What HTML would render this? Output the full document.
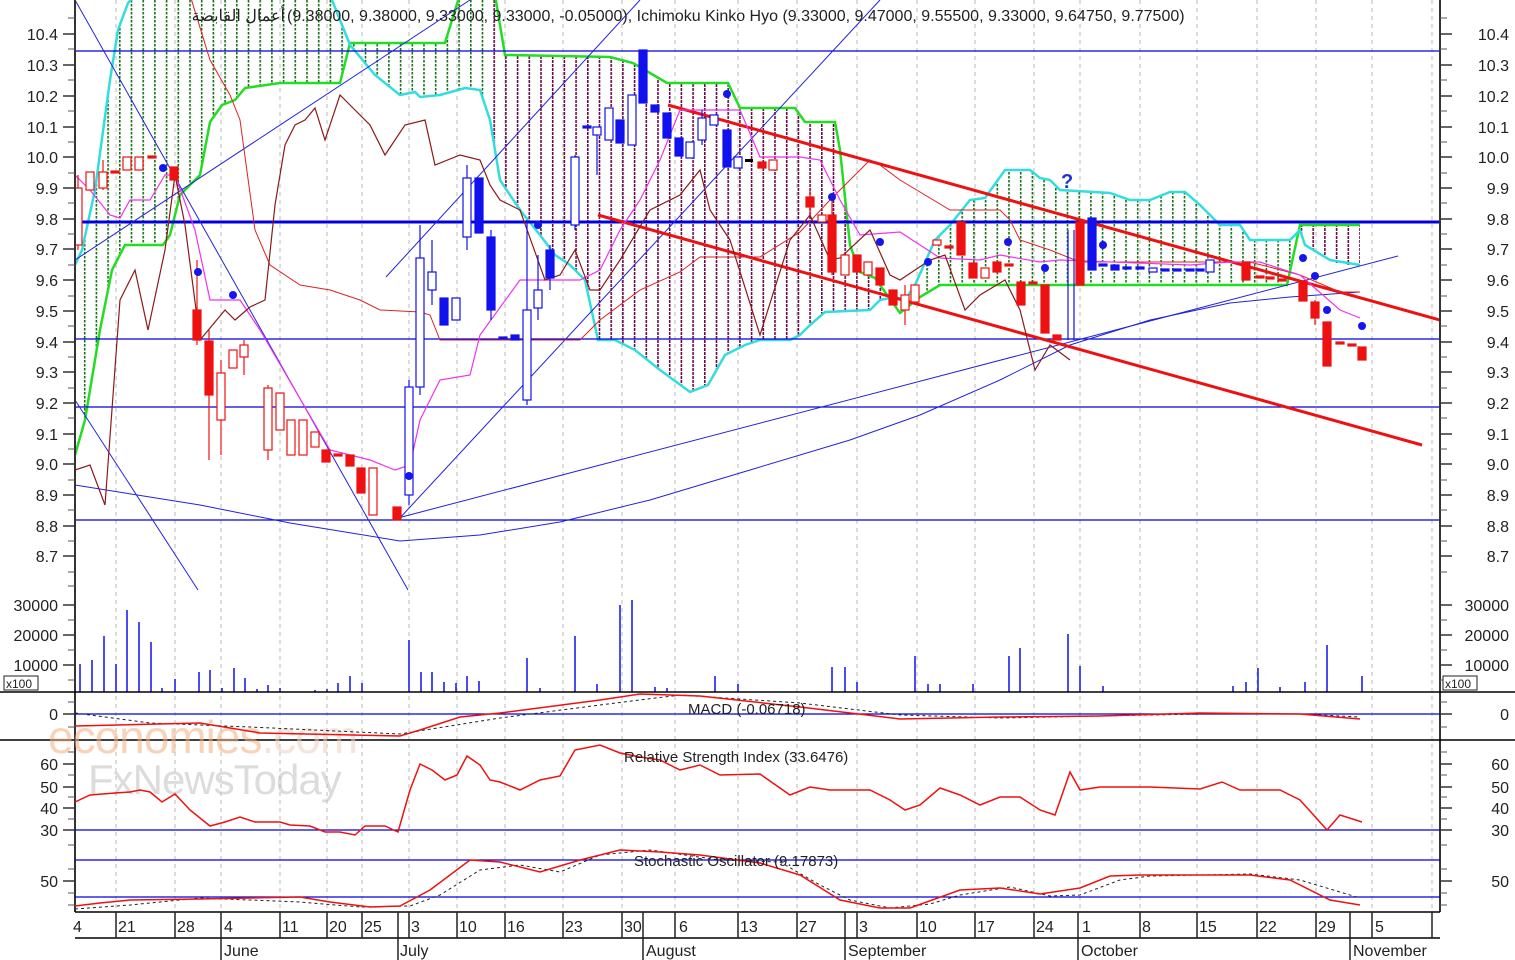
<!DOCTYPE html>
<html><head><meta charset="utf-8"><style>
html,body{margin:0;padding:0;background:#fff;}
svg{display:block;font-family:"Liberation Sans","Noto Sans CJK SC",sans-serif;}
</style></head><body>
<svg width="1515" height="960" viewBox="0 0 1515 960" xmlns="http://www.w3.org/2000/svg">
<defs>
<pattern id="pg" x="2" y="0" width="11.7" height="4" patternUnits="userSpaceOnUse"><rect x="0" y="0" width="1.6" height="2.5" fill="#167016"/></pattern>
<pattern id="pp" x="2" y="0" width="11.7" height="4" patternUnits="userSpaceOnUse"><rect x="0" y="0" width="1.6" height="3" fill="#6a0a4a"/></pattern>
<clipPath id="cl"><polygon points="75,455 85,420 100,330 112,270 125,245 163,245 170,235 180,195 200,175 210,122 222,105 235,100 245,88 280,83 340,83 350,43 445,43 455,10 460,-5 495,-5 505,55 610,57 633,63 667,83 728,83 740,108 795,108 805,122 835,122 840,150 850,245 860,272 875,278 900,313 920,297 940,285 1287,285 1300,225 1360,225 1360,265 1340,265 1330,260 1305,245 1300,230 1290,240 1250,240 1240,225 1220,225 1200,205 1185,192 1170,192 1150,200 1130,200 1110,193 1060,190 1050,180 1040,178 1030,170 1005,170 985,198 970,200 950,225 935,240 915,285 905,300 895,297 880,300 870,310 825,312 810,325 800,335 790,340 760,340 745,345 725,355 708,385 690,392 660,370 635,350 615,340 598,340 585,280 570,265 555,255 540,235 520,210 500,180 490,120 480,90 465,88 440,95 420,97 415,92 400,95 375,75 350,45 330,-5 128,-5 118,30 110,80 95,190 82,250 75,265"/></clipPath>
<clipPath id="chart"><rect x="75" y="0" width="1365" height="692"/></clipPath>
</defs>
<g stroke="#bbb" stroke-dasharray="4,4" stroke-width="1">
<path d="M116 0V912M175 0V912M221 0V912M280 0V912M327 0V912M362 0V912M409 0V912M457 0V912M505 0V912M563 0V912M622 0V912M675 0V912M738 0V912M797 0V912M857 0V912M917 0V912M975 0V912M1034 0V912M1080 0V912M1140 0V912M1197 0V912M1257 0V912M1316 0V912M1372 0V912M1432 0V912"/>
</g>
<g clip-path="url(#chart)">
<g clip-path="url(#cl)">
<rect x="75" y="0" width="410" height="600" fill="url(#pg)"/>
<rect x="485" y="0" width="432" height="600" fill="url(#pp)"/>
<rect x="917" y="0" width="380" height="600" fill="url(#pg)"/>
<rect x="1297" y="0" width="70" height="600" fill="url(#pp)"/>
</g>
<polyline fill="none" stroke="#22dd22" stroke-width="2.5" points="75,455 85,420 100,330 112,270 125,245 163,245 170,235 180,195 200,175 210,122 222,105 235,100 245,88 280,83 340,83 350,43 445,43 455,10 460,-5 495,-5 505,55 610,57 633,63 667,83 728,83 740,108 795,108 805,122 835,122 840,150 850,245 860,272 875,278 900,313 920,297 940,285 1287,285 1300,225 1360,225"/>
<polyline fill="none" stroke="#33dddd" stroke-width="2.5" points="75,265 82,250 95,190 110,80 118,30 128,3 135,-5 330,-5 350,45 375,75 400,95 415,92 420,97 440,95 465,88 480,90 490,120 500,180 520,210 540,235 555,255 570,265 585,280 598,340 615,340 635,350 660,370 690,392 708,385 725,355 745,345 760,340 790,340 800,335 810,325 825,312 870,310 880,300 895,297 905,300 915,285 935,240 950,225 970,200 985,198 1005,170 1030,170 1040,178 1050,180 1060,190 1110,193 1130,200 1150,200 1170,192 1185,192 1200,205 1220,225 1240,225 1250,240 1290,240 1300,230 1305,245 1330,260 1360,265"/>
<g stroke="#0000dd" stroke-width="1.3">
<path d="M75 51H1440M75 339H1440M75 407H1440M75 520H1440"/>
</g>
<path d="M75 222H1440" stroke="#0000dd" stroke-width="3"/>
<g stroke="#2222dd" stroke-width="1" fill="none">
<path d="M75 0L408 590M75 400L198 590M75 260L470 0M386 277L640 0M398 520L880 0M398 518L1398 256"/>
<polyline points="75,485 200,505 290,523 400,541 480,535 560,522 650,500 750,470 850,440 920,415 1000,380 1070,345 1150,320 1230,303 1290,297 1360,292"/>
</g>
<g stroke="#ee1111" stroke-width="3"><path d="M668 105L1440 320M598 215L1422 445"/></g>
<polyline fill="none" stroke="#dd2222" stroke-width="1" points="190,-5 210,60 230,95 240,120 255,230 270,265 300,285 330,290 360,300 380,310 420,312 430,315 440,340 580,340 600,320 640,290 680,272 700,257 760,257 800,232 830,200 870,160 880,165 900,180 950,210 1000,210 1010,220 1020,240 1050,250 1080,262 1250,262 1300,275 1340,292 1360,292"/>
<polyline fill="none" stroke="#ee33ee" stroke-width="1.2" points="75,175 90,190 110,215 120,218 130,200 150,200 165,175 175,175 195,230 210,300 240,300 260,330 330,450 370,460 395,470 410,465 420,420 440,380 470,375 480,335 520,280 580,280 600,270 620,230 640,200 660,160 680,110 740,110 760,157 800,157 820,160 840,200 860,235 900,232 940,258 980,260 1000,255 1040,262 1060,260 1190,265 1230,262 1260,262 1300,275 1340,310 1360,318"/>
<polyline fill="none" stroke="#8b1a1a" stroke-width="1.2" points="75,470 90,465 105,505 120,300 135,270 148,330 165,250 175,175 185,225 200,340 225,310 235,320 250,307 265,300 275,205 285,145 295,125 305,120 315,108 325,140 340,95 350,105 370,125 385,155 405,125 425,120 435,165 460,155 480,160 490,185 500,200 520,210 545,280 560,275 575,250 590,290 600,290 620,260 650,210 680,195 700,170 710,210 730,240 760,335 790,240 810,215 830,260 840,258 870,230 890,275 900,280 930,260 945,255 965,310 980,295 1005,280 1020,310 1035,370 1050,345 1070,360"/>
<g stroke-width="1.2">
<g stroke="#ee1111" fill="#fff">
<path d="M78 175V250M103 160V190M221 360V455M244 340V375M268 385V460M905 285V325M197 260V345M209 330V460M832 200V275M810 190V215M1315 300V325" fill="none"/>
<rect x="74" y="188" width="8" height="57"/><rect x="86" y="172" width="8" height="18"/><rect x="99" y="172" width="8" height="16"/>
<rect x="123" y="157" width="8" height="13"/><rect x="135" y="157" width="8" height="13"/>
<rect x="217" y="373" width="8" height="47"/><rect x="229" y="350" width="8" height="18"/><rect x="240" y="345" width="8" height="12"/>
<rect x="264" y="388" width="8" height="62"/><rect x="276" y="393" width="8" height="37"/><rect x="287" y="420" width="8" height="35"/><rect x="299" y="420" width="8" height="35"/><rect x="311" y="432" width="8" height="15"/><rect x="369" y="468" width="8" height="47"/>
<rect x="769" y="160" width="8" height="10"/><rect x="818" y="215" width="8" height="7"/><rect x="841" y="255" width="8" height="20"/><rect x="864" y="262" width="8" height="13"/><rect x="901" y="295" width="8" height="15"/><rect x="911" y="285" width="8" height="17"/><rect x="933" y="240" width="8" height="5"/><rect x="981" y="268" width="8" height="10"/>
</g>
<g fill="#ee1111" stroke="#ee1111">
<rect x="170" y="167" width="8" height="13"/><rect x="193" y="310" width="8" height="30"/><rect x="205" y="341" width="8" height="54"/><rect x="322" y="450" width="8" height="12"/><rect x="346" y="455" width="8" height="11"/><rect x="357" y="468" width="8" height="25"/><rect x="393" y="507" width="8" height="13"/>
<rect x="758" y="162" width="8" height="6"/><rect x="806" y="197" width="8" height="10"/><rect x="828" y="215" width="8" height="57"/><rect x="853" y="255" width="8" height="17"/><rect x="876" y="268" width="8" height="17"/><rect x="889" y="290" width="8" height="15"/>
<rect x="957" y="222" width="8" height="33"/><rect x="969" y="263" width="8" height="15"/><rect x="993" y="262" width="8" height="10"/><rect x="1017" y="282" width="8" height="23"/><rect x="1041" y="285" width="8" height="48"/><rect x="1053" y="335" width="8" height="5"/><rect x="1076" y="222" width="8" height="63"/>
<rect x="1242" y="262" width="8" height="18"/><rect x="1299" y="281" width="8" height="20"/><rect x="1311" y="302" width="8" height="16"/><rect x="1323" y="322" width="8" height="44"/><rect x="1358" y="347" width="8" height="13"/>
<rect x="111" y="171" width="8" height="2"/><rect x="148" y="156" width="8" height="2"/><rect x="334" y="454" width="8" height="2"/><rect x="945" y="246" width="8" height="2"/><rect x="1005" y="264" width="8" height="2"/><rect x="1029" y="282" width="8" height="2"/><rect x="1256" y="276" width="8" height="2"/><rect x="1266" y="277" width="8" height="2"/><rect x="1278" y="279" width="8" height="2"/><rect x="1336" y="342" width="8" height="2"/><rect x="1348" y="344" width="8" height="2"/>
</g>
<g stroke="#1111ee" fill="#fff">
<path d="M409 380V505M420 225V395M432 240V305M467 165V250M491 230V320M527 220V405M538 255V320M550 245V290M575 155V230M597 127V175M702 110V145" fill="none"/>
<rect x="405" y="387" width="8" height="108"/><rect x="416" y="258" width="8" height="129"/><rect x="428" y="272" width="8" height="18"/><rect x="452" y="298" width="8" height="22"/><rect x="463" y="178" width="8" height="59"/>
<rect x="523" y="310" width="8" height="90"/><rect x="534" y="290" width="8" height="18"/><rect x="571" y="157" width="8" height="68"/><rect x="593" y="127" width="8" height="8"/><rect x="605" y="108" width="8" height="32"/><rect x="628" y="95" width="8" height="50"/>
<rect x="686" y="142" width="8" height="16"/><rect x="698" y="118" width="8" height="22"/><rect x="710" y="115" width="8" height="10"/><rect x="734" y="157" width="8" height="11"/><rect x="1149" y="268" width="8" height="4"/><rect x="1206" y="260" width="8" height="12"/>
</g>
<g fill="#1111ee" stroke="#1111ee">
<rect x="440" y="298" width="8" height="27"/><rect x="475" y="178" width="8" height="55"/><rect x="487" y="237" width="8" height="73"/><rect x="511" y="335" width="8" height="5"/><rect x="546" y="250" width="8" height="28"/>
<rect x="616" y="120" width="8" height="23"/><rect x="639" y="50" width="8" height="53"/><rect x="651" y="105" width="8" height="7"/><rect x="663" y="113" width="8" height="25"/><rect x="675" y="138" width="8" height="18"/><rect x="723" y="130" width="8" height="37"/>
<rect x="1088" y="218" width="8" height="52"/><rect x="1111" y="265" width="8" height="5"/>
<rect x="499" y="337" width="8" height="2"/><rect x="583" y="126" width="8" height="2"/><rect x="1099" y="264" width="8" height="2"/><rect x="1123" y="267" width="8" height="2"/><rect x="1136" y="267" width="8" height="2"/><rect x="1161" y="269" width="8" height="2"/><rect x="1173" y="269" width="8" height="2"/><rect x="1186" y="269" width="8" height="2"/><rect x="1196" y="269" width="8" height="2"/>
</g>
<rect x="745" y="159" width="8" height="3" fill="#000"/>
<path d="M1068 230V340M1074 230V340" stroke="#1111ee" stroke-width="1.2"/>
</g>
<g fill="#1515ee">
<circle cx="163" cy="168" r="4"/><circle cx="198" cy="272" r="4"/><circle cx="233" cy="295" r="4"/><circle cx="409" cy="476" r="4"/><circle cx="538" cy="225" r="4"/><circle cx="727" cy="94" r="4"/><circle cx="832" cy="197" r="4"/><circle cx="880" cy="242" r="4"/><circle cx="928" cy="262" r="4"/><circle cx="1008" cy="242" r="4"/><circle cx="1045" cy="268" r="4"/><circle cx="1103" cy="245" r="4"/><circle cx="1303" cy="258" r="4"/><circle cx="1315" cy="276" r="4"/><circle cx="1327" cy="310" r="4"/><circle cx="1362" cy="326" r="4"/>
</g>
<text x="1061" y="188" font-size="20" font-weight="bold" fill="#2233cc">?</text>
<g stroke="#1111ee" stroke-width="1.5">
<path d="M80 664V692M92 660V692M104 636V692M116 664V692M127 610V692M139 622V692M151 642V692M162 688V692M175 679V692M199 672V692M210 670V692M222 688V692M234 668V692M245 678V692M257 689V692M268 685V692M280 688V692M315 690V692M327 689V692M338 683V692M350 676V692M362 683V692M409 640V692M421 672V692M432 672V692M444 682V692M456 683V692M467 676V692M479 681V692M527 658V692M540 688V692M575 636V692M597 684V692M620 605V692M632 600V692M655 687V692M667 688V692M715 676V692M738 684V692M832 667V692M845 667V692M857 682V692M915 656V692M928 684V692M940 684V692M973 684V692M1009 656V692M1020 648V692M1068 634V692M1080 666V692M1103 686V692M1233 686V692M1246 682V692M1258 668V692M1280 687V692M1305 682V692M1327 645V692M1362 676V692"/>
</g>
</g>
<text x="285" y="21" font-size="16" fill="#222" text-anchor="end">أعمال القابضة</text>
<text x="287" y="21" font-size="16" fill="#222">(9.38000, 9.38000, 9.33000, 9.33000, -0.05000), Ichimoku Kinko Hyo (9.33000, 9.47000, 9.55500, 9.33000, 9.64750, 9.77500)</text>
<g stroke="#333" stroke-width="2"><path d="M75 0V912M1440 0V912"/></g>
<g stroke="#000" stroke-width="1.5"><path d="M0 692H1515M0 740H1515M75 912H1440M75 938H1440"/></g>
<g stroke="#333" stroke-width="1.5">
<path d="M63 34H75M63 65H75M63 96H75M63 127H75M63 157H75M63 188H75M63 219H75M63 249H75M63 280H75M63 311H75M63 342H75M63 372H75M63 403H75M63 434H75M63 464H75M63 495H75M63 526H75M63 556H75M63 605H75M63 635H75M63 665H75M63 714H75M63 764H75M63 787H75M63 808H75M63 830H75M63 881H75"/>
<path d="M1440 34H1452M1440 65H1452M1440 96H1452M1440 127H1452M1440 157H1452M1440 188H1452M1440 219H1452M1440 249H1452M1440 280H1452M1440 311H1452M1440 342H1452M1440 372H1452M1440 403H1452M1440 434H1452M1440 464H1452M1440 495H1452M1440 526H1452M1440 556H1452M1440 605H1452M1440 635H1452M1440 665H1452M1440 714H1452M1440 764H1452M1440 787H1452M1440 808H1452M1440 830H1452M1440 881H1452"/>
</g>
<g stroke="#555" stroke-width="1"><path d="M68 18H75M68 49H75M68 80H75M68 111H75M68 142H75M68 173H75M68 203H75M68 234H75M68 265H75M68 296H75M68 326H75M68 357H75M68 388H75M68 418H75M68 449H75M68 480H75M68 510H75M68 541H75M68 572H75M68 586H75M68 620H75M68 650H75M68 680H75M68 702H75M68 727H75M68 752H75M68 775H75M68 797H75M68 819H75M68 845H75M68 869H75M68 893H75M68 905H75
M1440 18H1447M1440 49H1447M1440 80H1447M1440 111H1447M1440 142H1447M1440 173H1447M1440 203H1447M1440 234H1447M1440 265H1447M1440 296H1447M1440 326H1447M1440 357H1447M1440 388H1447M1440 418H1447M1440 449H1447M1440 480H1447M1440 510H1447M1440 541H1447M1440 572H1447M1440 620H1447M1440 650H1447M1440 680H1447M1440 702H1447M1440 727H1447M1440 752H1447M1440 775H1447M1440 797H1447M1440 819H1447M1440 845H1447M1440 869H1447M1440 893H1447M1440 905H1447"/></g>
<g font-size="16" fill="#222" text-anchor="end">
<text x="58" y="40">10.4</text><text x="58" y="71">10.3</text><text x="58" y="102">10.2</text><text x="58" y="133">10.1</text><text x="58" y="163">10.0</text><text x="58" y="194">9.9</text><text x="58" y="225">9.8</text><text x="58" y="255">9.7</text><text x="58" y="286">9.6</text><text x="58" y="317">9.5</text><text x="58" y="348">9.4</text><text x="58" y="378">9.3</text><text x="58" y="409">9.2</text><text x="58" y="440">9.1</text><text x="58" y="470">9.0</text><text x="58" y="501">8.9</text><text x="58" y="532">8.8</text><text x="58" y="562">8.7</text>
<text x="58" y="611">30000</text><text x="58" y="641">20000</text><text x="58" y="671">10000</text><text x="58" y="720">0</text><text x="58" y="770">60</text><text x="58" y="793">50</text><text x="58" y="814">40</text><text x="58" y="836">30</text><text x="58" y="887">50</text>
<text x="1509" y="40">10.4</text><text x="1509" y="71">10.3</text><text x="1509" y="102">10.2</text><text x="1509" y="133">10.1</text><text x="1509" y="163">10.0</text><text x="1509" y="194">9.9</text><text x="1509" y="225">9.8</text><text x="1509" y="255">9.7</text><text x="1509" y="286">9.6</text><text x="1509" y="317">9.5</text><text x="1509" y="348">9.4</text><text x="1509" y="378">9.3</text><text x="1509" y="409">9.2</text><text x="1509" y="440">9.1</text><text x="1509" y="470">9.0</text><text x="1509" y="501">8.9</text><text x="1509" y="532">8.8</text><text x="1509" y="562">8.7</text>
<text x="1509" y="611">30000</text><text x="1509" y="641">20000</text><text x="1509" y="671">10000</text><text x="1509" y="720">0</text><text x="1509" y="770">60</text><text x="1509" y="793">50</text><text x="1509" y="814">40</text><text x="1509" y="836">30</text><text x="1509" y="887">50</text>
</g>
<rect x="4" y="676" width="34" height="14" fill="#fff" stroke="#222"/><text x="6" y="688" font-size="12" fill="#222">x100</text>
<rect x="1443" y="676" width="34" height="14" fill="#fff" stroke="#222"/><text x="1445" y="688" font-size="12" fill="#222">x100</text>
<text x="48" y="753" font-size="46" fill="#f5b080" opacity="0.55" letter-spacing="-1">economies<tspan fill="#f0d0c0">.com</tspan></text>
<text x="88" y="794" font-size="42" fill="#bbb" opacity="0.5" letter-spacing="-1">FxNewsToday</text>
<path d="M75 714H1440" stroke="#0000dd" stroke-width="1.3"/>
<polyline fill="none" stroke="#222" stroke-width="1" stroke-dasharray="3,3" points="75,713 150,723 250,727 400,734 500,718 600,705 680,695 800,703 900,715 1000,718 1200,714 1300,714 1360,717"/>
<polyline fill="none" stroke="#ee1111" stroke-width="1.5" points="75,726 200,723 260,733 400,736 420,730 460,717 500,713 600,700 640,694 700,696 800,707 900,719 1000,717 1100,716 1200,713 1300,714 1360,719"/>
<text x="688" y="714" font-size="15" fill="#222">MACD (-0.06718)</text>
<path d="M75 830H1440" stroke="#0000dd" stroke-width="1.3"/>
<polyline fill="none" stroke="#ee1111" stroke-width="1.5" points="75,802 90,795 115,793 130,792 140,790 150,792 162,802 175,794 190,810 210,826 225,822 240,817 255,822 280,822 290,825 310,826 325,832 340,832 355,835 365,826 385,826 398,832 410,790 420,764 432,770 445,780 457,775 467,756 480,765 490,780 500,782 520,790 540,780 560,776 575,750 600,745 620,753 640,757 660,760 680,770 700,765 720,775 760,774 790,795 810,787 830,790 870,790 890,800 905,810 920,805 940,788 960,795 980,805 1000,797 1020,797 1040,810 1055,815 1070,772 1080,790 1100,787 1150,787 1200,789 1222,782 1240,790 1280,790 1300,800 1327,830 1340,815 1362,822"/>
<text x="624" y="762" font-size="15" fill="#222">Relative Strength Index (33.6476)</text>
<path d="M75 860H1440M75 897H1440" stroke="#0000dd" stroke-width="1.3"/>
<polyline fill="none" stroke="#222" stroke-width="1" stroke-dasharray="3,3" points="75,909 130,905 200,898 300,902 360,907 410,906 440,895 480,870 520,865 560,872 600,855 650,850 720,860 780,862 820,885 850,900 890,908 930,904 960,895 1010,887 1050,896 1080,895 1120,880 1150,876 1250,874 1300,880 1340,892 1360,898"/>
<polyline fill="none" stroke="#ee1111" stroke-width="1.5" points="75,906 100,903 130,900 200,899 300,897 330,902 370,907 400,906 430,890 470,860 500,862 540,872 580,860 620,850 660,852 700,855 760,863 800,875 840,900 880,908 910,908 960,890 1000,888 1040,894 1080,888 1110,876 1140,875 1250,875 1290,880 1330,900 1360,905"/>
<text x="634" y="866" font-size="15" fill="#222">Stochastic Oscillator (9.17873)</text>
<g stroke="#222" stroke-width="1.5"><path d="M116 912V938M175 912V938M221 912V960M280 912V938M327 912V938M362 912V938M398 912V960M409 912V938M457 912V938M505 912V938M563 912V938M622 912V938M643 912V960M675 912V938M738 912V938M797 912V938M845 912V960M857 912V938M917 912V938M975 912V938M1034 912V938M1078 912V960M1140 912V938M1197 912V938M1257 912V938M1316 912V938M1350 912V960M1372 912V938M1432 912V938"/></g>
<g font-size="16" fill="#222">
<text x="73" y="932">4</text><text x="118" y="932">21</text><text x="177" y="932">28</text><text x="224" y="932">4</text><text x="282" y="932">11</text><text x="329" y="932">20</text><text x="364" y="932">25</text><text x="411" y="932">3</text><text x="459" y="932">10</text><text x="507" y="932">16</text><text x="565" y="932">23</text><text x="624" y="932">30</text><text x="679" y="932">6</text><text x="740" y="932">13</text><text x="799" y="932">27</text><text x="859" y="932">3</text><text x="919" y="932">10</text><text x="977" y="932">17</text><text x="1036" y="932">24</text><text x="1082" y="932">1</text><text x="1142" y="932">8</text><text x="1199" y="932">15</text><text x="1259" y="932">22</text><text x="1318" y="932">29</text><text x="1375" y="932">5</text>
<text x="224" y="956">June</text><text x="400" y="956">July</text><text x="646" y="956">August</text><text x="848" y="956">September</text><text x="1081" y="956">October</text><text x="1353" y="956">November</text>
</g>
</svg>
</body></html>
